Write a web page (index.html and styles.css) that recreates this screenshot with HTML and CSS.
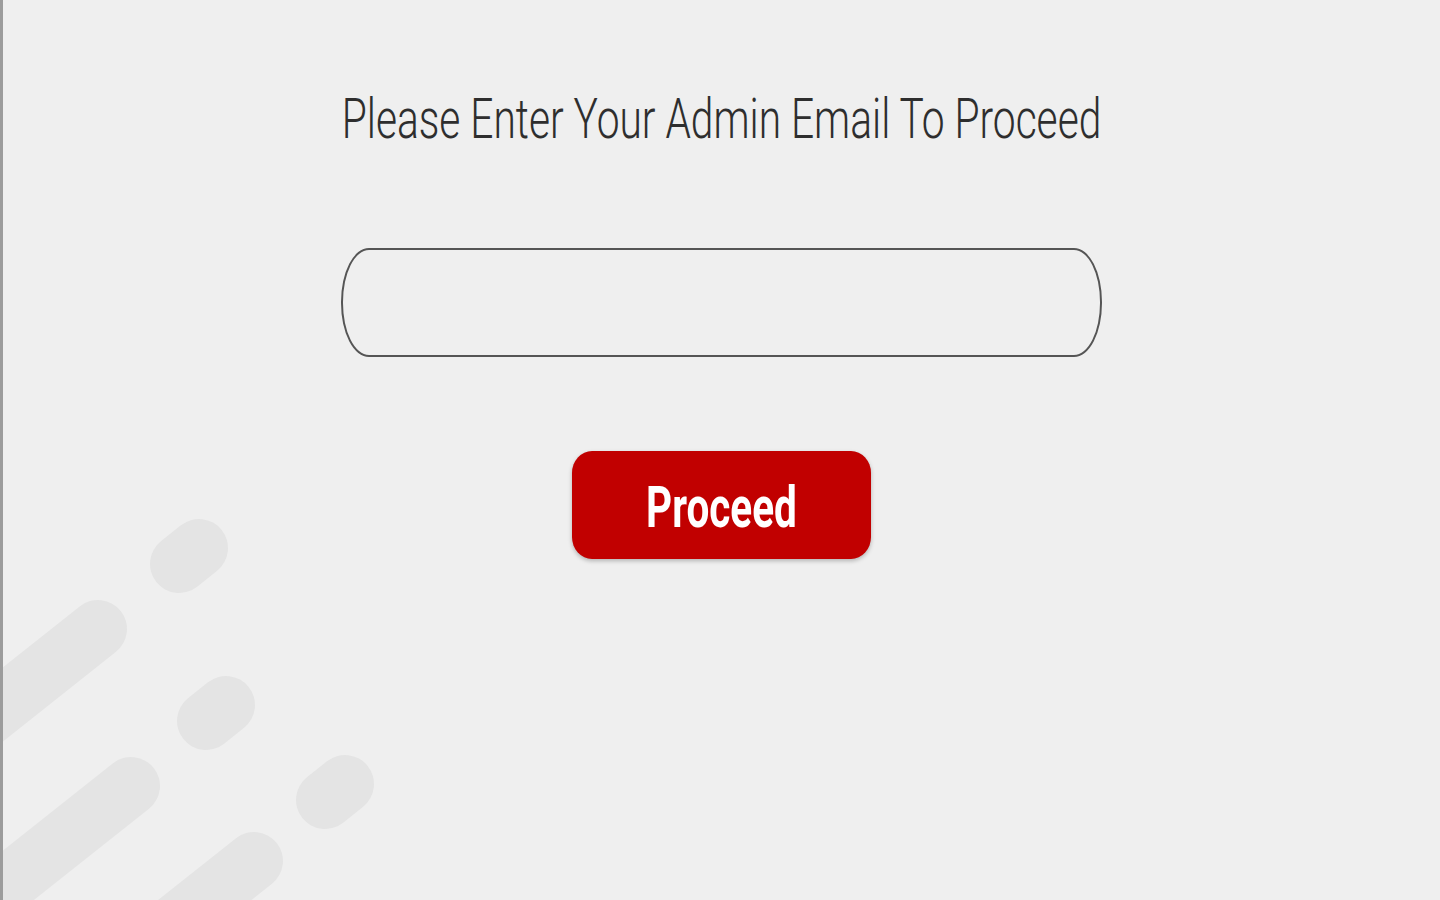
FILE: index.html
```html
<!DOCTYPE html>
<html lang="en">
<head>
  <meta charset="UTF-8">
  <meta name="viewport" content="width=device-width, initial-scale=1.0">
  <title>Admin Login</title>
  <link rel="stylesheet" href="styles.css">
</head>
<body>
  <!-- Decorative stripes, bottom left -->
  <svg class="stripes" width="420" height="420" viewBox="0 480 420 420" aria-hidden="true">
    <g stroke="#e4e4e4" stroke-width="58" stroke-linecap="round">
      <line x1="176" y1="564" x2="196" y2="548"/>
      <line x1="95" y1="629" x2="-60" y2="752"/>
      <line x1="203" y1="721" x2="223" y2="705"/>
      <line x1="128" y1="786" x2="-70" y2="943"/>
      <line x1="322" y1="800" x2="342" y2="784"/>
      <line x1="251" y1="861" x2="150" y2="941"/>
    </g>
  </svg>

  <main class="login">
    <h1 class="login-title"><span>Please Enter Your Admin Email To Proceed</span></h1>
    <input class="login-input" type="email" aria-label="Admin email">
    <button class="login-button" type="button"><span>Proceed</span></button>
  </main>
</body>
</html>
```

FILE: styles.css
```css
html {
  background-color: #efefef;
}

body {
  margin: 0;
  min-height: 100vh;
  box-sizing: border-box;
  border-left: 3px solid #9c9c9c;
  background-color: #efefef;
  font-family: 'Roboto', sans-serif;
  overflow: hidden;
}

.stripes {
  position: absolute;
  left: 3px;
  bottom: 0;
}

.login {
  position: relative;
  display: flex;
  flex-direction: column;
  align-items: center;
  padding-top: 91px;
}

.login-title {
  margin: 0;
  font-size: 40.7px;
  font-weight: 300;
  line-height: 56px;
  color: #2e2e2e;
  white-space: nowrap;
}

.login-title span {
  display: inline-block;
  transform: scaleY(1.36);
}

.login-input {
  margin-top: 101px;
  width: 761px;
  height: 109px;
  box-sizing: border-box;
  border: 2px solid #555;
  border-radius: 28px / 54px;
  background: transparent;
  outline: none;
  padding: 0 30px;
  font-family: inherit;
  font-size: 24px;
}

.login-button {
  margin-top: 94px;
  width: 299px;
  height: 108px;
  padding-top: 4px;
  border: none;
  border-radius: 20px / 22px;
  background-color: #c10000;
  color: #fff;
  font-family: inherit;
  font-size: 40.5px;
  font-weight: 700;
  box-shadow: 0 2px 4px rgba(0, 0, 0, 0.25);
  cursor: pointer;
}

.login-button span {
  display: inline-block;
  transform: scaleY(1.42);
}
```
